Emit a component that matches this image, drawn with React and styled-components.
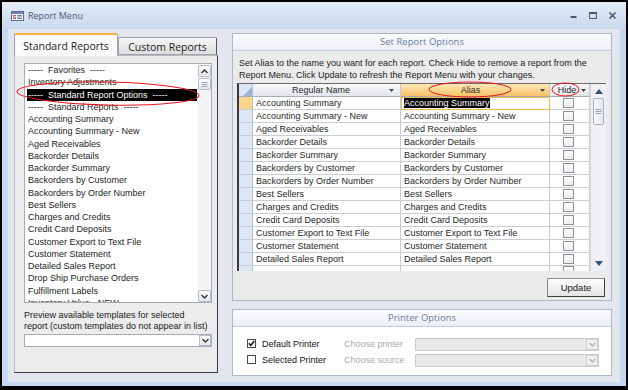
import React from 'react';
import styled, { createGlobalStyle } from 'styled-components';

const Global = createGlobalStyle`
  html, body { margin: 0; padding: 0; background: #fff; }
  body { font-family: "Liberation Sans", Arial, sans-serif; }
  * { box-sizing: border-box; }
`;

const UI = '"Open Sans", "Noto Sans", sans-serif';

const Window = styled.div`
  position: relative;
  width: 628px;
  height: 390px;
  border: 2px solid #000;
  border-bottom-width: 4px;
  background: #c6d8ef;
  display: flex;
  flex-direction: column;
  padding: 0 6px 4px;
  overflow: hidden;
`;

const TitleBar = styled.div`
  height: 27px;
  margin: 0 -6px;
  flex: none;
  display: flex;
  align-items: center;
  padding: 0 8px 0 9px;
  background: linear-gradient(#e6eef9, #d3e0f1 60%, #cbdaee);
`;

const TitleText = styled.span`
  font-family: ${UI};
  font-size: 9px;
  color: #4a5874;
  margin-left: 4px;
  flex: 1;
`;

const Controls = styled.div`
  display: flex;
  align-items: center;
  gap: 10px;
  padding-right: 1px;
`;

const Body = styled.div`
  flex: 1;
  background: #e3e7ed;
  display: flex;
  gap: 14px;
  padding: 4px 8px 0 6px;
`;

const LeftCol = styled.div`
  width: 204px;
  display: flex;
  flex-direction: column;
`;

const Tabs = styled.div`
  height: 22px;
  display: flex;
  align-items: flex-end;
`;

const Tab = styled.div`
  font-family: ${UI};
  font-size: 10.5px;
  color: #1e1e1e;
  display: flex;
  align-items: center;
  justify-content: center;
  position: relative;
  z-index: ${p => (p.$active ? 2 : 1)};
  width: ${p => (p.$active ? '104px' : '99px')};
  height: ${p => (p.$active ? '23px' : '18px')};
  margin-bottom: ${p => (p.$active ? '-1px' : '0')};
  padding-top: 1px;
  border: 1px solid #9ea4ad;
  border-bottom: ${p => (p.$active ? 'none' : '1px solid #9ea4ad')};
  border-right-color: ${p => (p.$active ? '#9ea4ad' : '#555')};
  border-top: ${p => (p.$active ? '2px solid #f3b040' : '1px solid #9ea4ad')};
  background: ${p => (p.$active ? '#fbfbfb' : 'linear-gradient(#f6f6f6, #dedede)')};
  border-radius: 2px 2px 0 0;
`;

const LeftPanel = styled.div`
  height: 318px;
  background: #ececec;
  border: 1px solid #b9b9b9;
  border-right-color: #3c3c3c;
  border-bottom-color: #3c3c3c;
  padding: 7px 5px 0 9px;
`;

const ListBox = styled.div`
  height: 240px;
  border: 1px solid #a5acb5;
  background: #fff;
  display: flex;
`;

const ListItems = styled.div`
  flex: 1;
  overflow: hidden;
  padding: 0 1px 0 2px;
`;

const ListItem = styled.div`
  height: 12.25px;
  line-height: 12.25px;
  font-size: 9px;
  white-space: pre;
  color: ${p => (p.$sel ? '#fff' : '#1d1d1d')};
  background: ${p => (p.$sel ? '#000' : 'transparent')};
  padding-left: 1px;
`;

const ListScroll = styled.div`
  width: 13px;
  margin: 1px 0 0 0;
  display: flex;
  flex-direction: column;
  background: #f4f4f4;
`;

const ScrollBox = styled.div`
  width: 13px;
  height: ${p => p.$h || 12}px;
  border: 1px solid #b6bcc6;
  border-radius: 2px;
  background: linear-gradient(#ffffff, #e4e6ea);
  display: flex;
  align-items: center;
  justify-content: center;
  margin-top: ${p => p.$mt || 0}px;
`;

const Spacer = styled.div`
  flex: 1;
`;

const Hint = styled.div`
  margin-top: 7px;
  font-size: 9px;
  line-height: 11px;
  color: #1a1a1a;
  white-space: nowrap;
`;

const Combo = styled.div`
  margin-top: 2px;
  height: 13px;
  border: 1px solid #a5acb5;
  background: ${p => (p.$disabled ? '#e9e9e9' : '#fff')};
  border-color: ${p => (p.$disabled ? '#c9c9c9' : '#a5acb5')};
  display: flex;
  justify-content: flex-end;
  align-items: center;
  width: ${p => (p.$w ? p.$w + 'px' : 'auto')};
`;

const ComboBtn = styled.div`
  width: 12px;
  height: 11px;
  border: 1px solid ${p => (p.$disabled ? '#d0d0d0' : '#b6bcc6')};
  background: ${p => (p.$disabled ? '#f1f1f1' : 'linear-gradient(#fff, #e4e6ea)')};
  display: flex;
  align-items: center;
  justify-content: center;
`;

const RightCol = styled.div`
  width: 380px;
  display: flex;
  flex-direction: column;
  gap: 8px;
`;

const Panel = styled.div`
  height: ${p => p.$h}px;
  border: 1px solid #abb8ca;
  background: #ebebeb;
  display: flex;
  flex-direction: column;
`;

const PanelHeader = styled.div`
  height: 17px;
  flex: none;
  background: linear-gradient(#fcfdfe, #eaeef3);
  border-bottom: 1px solid #c3ccd9;
  text-align: center;
  font-family: ${UI};
  font-size: 9.5px;
  line-height: 16px;
  color: #6b7da3;
`;

const SetBody = styled.div`
  padding: 6px 5px 0 4px;
`;

const Instructions = styled.div`
  font-size: 9px;
  line-height: 12px;
  height: 24px;
  margin-bottom: 2px;
  padding-left: 2px;
  white-space: nowrap;
  color: #1a1a1a;
`;

const Grid = styled.div`
  width: 369px;
  height: 188px;
  display: flex;
  border-top: 1px solid #6a6a6a;
  border-left: 2px solid #3a3a3a;
  background: #fff;
`;

const GridTable = styled.div`
  width: 351px;
  overflow: hidden;
  display: grid;
  grid-template-columns: 14px 148px 149px 40px;
  grid-template-rows: 13px;
  grid-auto-rows: 13px;
  align-content: start;
`;

const HeadCell = styled.div`
  display: flex;
  align-items: center;
  padding: 0 ${p => p.$pr || 5}px 0 ${p => p.$pl || 0}px;
  font-size: 9px;
  color: #2a2a2a;
  background: ${p =>
    p.$active ? 'linear-gradient(#fde7b8, #f8c266)' : 'linear-gradient(#f7f8fa, #e2e5ea)'};
  border-right: 1px solid #c3c8d0;
  border-bottom: 1px solid #a4acb8;
`;

const HeadLabel = styled.span`
  flex: 1;
  text-align: center;
`;

const Corner = styled.div`
  background: #dbe5f3;
  border-right: 1px solid #b6c3d7;
  border-bottom: 1px solid #a4acb8;
  display: flex;
  align-items: flex-end;
  justify-content: flex-end;
`;

const SelCell = styled.div`
  background: ${p => (p.$current ? '#fcd48c' : '#dde6f3')};
  border-right: 1px solid #b6c3d7;
  border-bottom: 1px solid #c3cfe0;
`;

const Cell = styled.div`
  font-size: 9px;
  line-height: 12px;
  padding-left: 3px;
  white-space: nowrap;
  overflow: hidden;
  color: #1f1f1f;
  border-right: 1px solid #c9cdd4;
  border-bottom: 1px solid #c9cdd4;
  ${p => p.$editing && `
    border: 1px solid #f2b654;
    padding-left: 2px;
    line-height: 11px;
  `}
`;

const Selected = styled.span`
  background: #000;
  color: #fff;
`;

const HideCell = styled.div`
  border-right: 1px solid #c9cdd4;
  border-bottom: 1px solid #c9cdd4;
  display: flex;
  align-items: ${p => (p.$partial ? 'flex-start' : 'center')};
  justify-content: center;
  padding-right: 2px;
`;

const GridCheck = styled.div`
  width: 11px;
  height: 10px;
  border: 1px solid #8e939b;
  background: linear-gradient(#ffffff, #ececec);
`;

const GridScroll = styled.div`
  width: 16px;
  background: #eef0f4;
  border-left: 1px solid #d8dce2;
  display: flex;
  flex-direction: column;
  align-items: center;
  padding: 5px 0 5px;
`;

const Thumb = styled.div`
  width: 11px;
  height: 27px;
  margin-top: 4px;
  border: 1px solid #a7b1c0;
  border-radius: 2px;
  background: linear-gradient(90deg, #f9fafc, #e3e7ee);
  display: flex;
  align-items: center;
  justify-content: center;
`;

const ButtonRow = styled.div`
  display: flex;
  justify-content: flex-end;
  margin-top: 7px;
  padding-right: 1px;
`;

const Button = styled.div`
  width: 58px;
  height: 19px;
  border: 1px solid #8a8a8a;
  border-right-color: #3e3e3e;
  border-bottom-color: #3e3e3e;
  background: linear-gradient(#fdfdfd, #e4e4e4);
  font-size: 9.5px;
  display: flex;
  align-items: center;
  justify-content: center;
  color: #1a1a1a;
`;

const PrinterBody = styled.div`
  flex: 1;
  background: #fff;
  padding: 10px 0 0 14px;
  display: flex;
  flex-direction: column;
  gap: 3px;
`;

const PrinterRow = styled.div`
  height: 13px;
  display: flex;
  align-items: center;
`;

const CheckBox = styled.div`
  width: 9px;
  height: 9px;
  border: 1px solid #4a4a4a;
  background: #fff;
  display: flex;
  align-items: center;
  justify-content: center;
`;

const PrinterLabel = styled.span`
  width: 82px;
  margin-left: 6px;
  font-size: 9px;
  color: #111;
`;

const ChooseHint = styled.span`
  width: 71px;
  font-size: 9px;
  color: #a9a9a9;
`;

const Overlay = styled.svg`
  position: absolute;
  top: -2px;
  left: -2px;
  pointer-events: none;
`;

const Chevron = ({ up, color = '#333' }) => (
  <svg width="7" height="5" viewBox="0 0 7 5">
    <path d={up ? 'M0.5 4 L3.5 1 L6.5 4' : 'M0.5 1 L3.5 4 L6.5 1'} fill="none" stroke={color} strokeWidth="1.4" />
  </svg>
);

const Tri = ({ up, color = '#344d80', w = 7, h = 4 }) => (
  <svg width={w} height={h} viewBox={`0 0 ${w} ${h}`}>
    <path d={up ? `M0 ${h} L${w / 2} 0 L${w} ${h} Z` : `M0 0 L${w} 0 L${w / 2} ${h} Z`} fill={color} />
  </svg>
);

const Grip = () => (
  <svg width="7" height="7" viewBox="0 0 7 7">
    {[1, 3, 5].map(y => (
      <line key={y} x1="0.5" x2="6.5" y1={y + 0.5} y2={y + 0.5} stroke="#9aa4b4" strokeWidth="1" />
    ))}
  </svg>
);

const FormIcon = () => (
  <svg width="13" height="10" viewBox="0 0 13 10">
    <rect x="0.5" y="0.5" width="12" height="9" fill="#fff" stroke="#5b6f99" />
    <rect x="1" y="1" width="11" height="2" fill="#6b82b3" />
    <rect x="2" y="4" width="3" height="1.5" fill="#c9506c" />
    <rect x="2" y="6.5" width="3" height="1.5" fill="#c9506c" />
    <rect x="6" y="4" width="5" height="1.5" fill="#6b82b3" />
    <rect x="6" y="6.5" width="5" height="1.5" fill="#6b82b3" />
  </svg>
);

const listItems = [
  '-----  Favorites  -----',
  'Inventory Adjustments',
  '-----  Standard Report Options  -----',
  '-----  Standard Reports  -----',
  'Accounting Summary',
  'Accounting Summary - New',
  'Aged Receivables',
  'Backorder Details',
  'Backorder Summary',
  'Backorders by Customer',
  'Backorders by Order Number',
  'Best Sellers',
  'Charges and Credits',
  'Credit Card Deposits',
  'Customer Export to Text File',
  'Customer Statement',
  'Detailed Sales Report',
  'Drop Ship Purchase Orders',
  'Fulfillment Labels',
  'Inventory Value - NEW',
];

const reports = [
  'Accounting Summary',
  'Accounting Summary - New',
  'Aged Receivables',
  'Backorder Details',
  'Backorder Summary',
  'Backorders by Customer',
  'Backorders by Order Number',
  'Best Sellers',
  'Charges and Credits',
  'Credit Card Deposits',
  'Customer Export to Text File',
  'Customer Statement',
  'Detailed Sales Report',
];

export default function App() {
  return (
    <>
      <Global />
      <Window>
        <TitleBar>
          <FormIcon />
          <TitleText>Report Menu</TitleText>
          <Controls>
            <svg width="9" height="9" viewBox="0 0 9 9">
              <rect x="1.5" y="5" width="6" height="2" fill="#4b5b7a" />
            </svg>
            <svg width="10" height="9" viewBox="0 0 10 9">
              <rect x="1.5" y="1.5" width="7" height="6" fill="none" stroke="#4b5b7a" />
              <rect x="1" y="1" width="8" height="2" fill="#4b5b7a" />
            </svg>
            <svg width="9" height="9" viewBox="0 0 9 9">
              <path d="M1.5 1.5 L7.5 7.5 M7.5 1.5 L1.5 7.5" stroke="#4b5b7a" strokeWidth="1.6" />
            </svg>
          </Controls>
        </TitleBar>
        <Body>
          <LeftCol>
            <Tabs>
              <Tab $active>Standard Reports</Tab>
              <Tab>Custom Reports</Tab>
            </Tabs>
            <LeftPanel>
              <ListBox>
                <ListItems>
                  {listItems.map((t, i) => (
                    <ListItem key={i} $sel={i === 2}>{t}</ListItem>
                  ))}
                </ListItems>
                <ListScroll>
                  <ScrollBox><Chevron up /></ScrollBox>
                  <ScrollBox $mt={1}><Grip /></ScrollBox>
                  <Spacer />
                  <ScrollBox><Chevron /></ScrollBox>
                </ListScroll>
              </ListBox>
              <Hint>
                Preview available templates for selected
                <br />
                report (custom templates do not appear in list)
              </Hint>
              <Combo>
                <ComboBtn><Chevron /></ComboBtn>
              </Combo>
            </LeftPanel>
          </LeftCol>
          <RightCol>
            <Panel $h={268}>
              <PanelHeader>Set Report Options</PanelHeader>
              <SetBody>
                <Instructions>
                  Set Alias to the name you want for each report. Check Hide to remove a report from the
                  <br />
                  Report Menu. Click Update to refresh the Report Menu with your changes.
                </Instructions>
                <Grid>
                  <GridTable>
                    <Corner>
                      <svg width="10" height="10" viewBox="0 0 10 10">
                        <path d="M10 1 L10 10 L1 10 Z" fill="#9fb3d3" />
                      </svg>
                    </Corner>
                    <HeadCell $pr={6}>
                      <HeadLabel>Regular Name</HeadLabel>
                      <Tri color="#444" w={5} h={3} />
                    </HeadCell>
                    <HeadCell $active $pr={4}>
                      <HeadLabel>Alias</HeadLabel>
                      <Tri color="#444" w={5} h={3} />
                    </HeadCell>
                    <HeadCell $pr={3} $pl={3}>
                      <HeadLabel>Hide</HeadLabel>
                      <Tri color="#444" w={5} h={3} />
                    </HeadCell>
                    {reports.map((r, i) => (
                      <React.Fragment key={r}>
                        <SelCell $current={i === 0} />
                        <Cell>{r}</Cell>
                        {i === 0 ? (
                          <Cell $editing><Selected>{r}</Selected></Cell>
                        ) : (
                          <Cell>{r}</Cell>
                        )}
                        <HideCell><GridCheck /></HideCell>
                      </React.Fragment>
                    ))}
                    <SelCell />
                    <Cell />
                    <Cell />
                    <HideCell $partial><GridCheck /></HideCell>
                  </GridTable>
                  <GridScroll>
                    <Tri up w={8} h={5} />
                    <Thumb><Grip /></Thumb>
                    <Spacer />
                    <Tri w={8} h={5} />
                  </GridScroll>
                </Grid>
                <ButtonRow>
                  <Button>Update</Button>
                </ButtonRow>
              </SetBody>
            </Panel>
            <Panel $h={67}>
              <PanelHeader>Printer Options</PanelHeader>
              <PrinterBody>
                <PrinterRow>
                  <CheckBox>
                    <svg width="7" height="7" viewBox="0 0 7 7">
                      <path d="M0.8 3.2 L2.8 5.4 L6.4 1" fill="none" stroke="#111" strokeWidth="1.5" />
                    </svg>
                  </CheckBox>
                  <PrinterLabel>Default Printer</PrinterLabel>
                  <ChooseHint>Choose printer</ChooseHint>
                  <Combo $disabled $w={184}>
                    <ComboBtn $disabled><Chevron color="#b5b5b5" /></ComboBtn>
                  </Combo>
                </PrinterRow>
                <PrinterRow>
                  <CheckBox />
                  <PrinterLabel>Selected Printer</PrinterLabel>
                  <ChooseHint>Choose source</ChooseHint>
                  <Combo $disabled $w={184}>
                    <ComboBtn $disabled><Chevron color="#b5b5b5" /></ComboBtn>
                  </Combo>
                </PrinterRow>
              </PrinterBody>
            </Panel>
          </RightCol>
        </Body>
        <Overlay width="628" height="390" viewBox="0 0 628 390">
          <ellipse cx="108" cy="93.5" rx="91" ry="11.5" fill="none" stroke="#e8141b" strokeWidth="1" transform="rotate(1.2 108 93.5)" />
          <ellipse cx="470" cy="89.5" rx="41" ry="7.5" fill="none" stroke="#e8141b" strokeWidth="1" />
          <ellipse cx="565.5" cy="89.5" rx="13.5" ry="6.5" fill="none" stroke="#e8141b" strokeWidth="1" />
        </Overlay>
      </Window>
    </>
  );
}
